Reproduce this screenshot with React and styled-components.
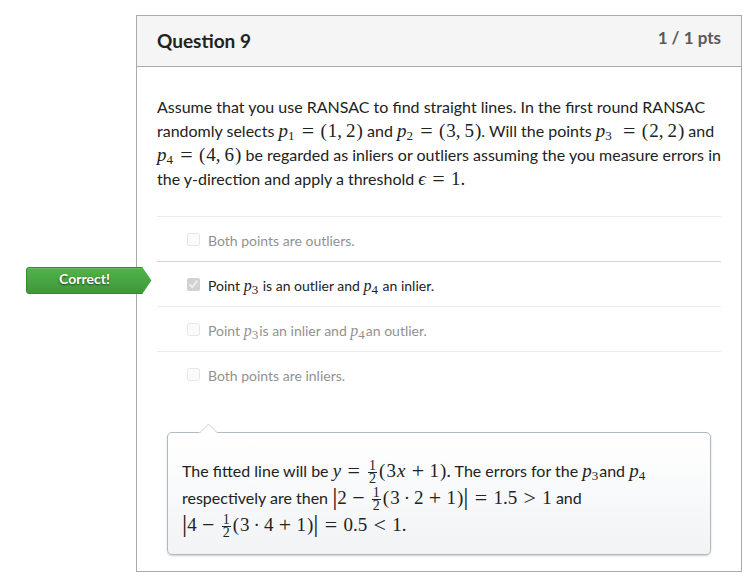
import React from "react";
import styled, { createGlobalStyle } from "styled-components";

const GlobalStyle = createGlobalStyle`
  *, *::before, *::after { box-sizing: border-box; }
  body {
    margin: 0;
    background: #fff;
    color: #222;
    font-family: Lato, "Liberation Sans", sans-serif;
    font-size: 16px;
    line-height: 24px;
  }
`;

const Page = styled.main`
  padding: 15px 9px 9px 136px;
`;

const Card = styled.section`
  border: 1px solid #aaa;
  background: #fff;
`;

const Header = styled.header`
  display: flex;
  justify-content: space-between;
  align-items: flex-start;
  padding: 10px 20px 13px;
  background: #f5f5f5;
  border-bottom: 1px solid #aaa;
`;

const Title = styled.h2`
  margin: 3px 0 0;
  font-size: 19px;
  line-height: 24px;
  font-weight: 700;
`;

const Points = styled.span`
  font-size: 17px;
  line-height: 24px;
  font-weight: 700;
  color: #595959;
`;

const Body = styled.div`
  padding: 28px 20px 16px;
`;

const Prompt = styled.p`
  margin: 0 0 25px;
`;

const Answers = styled.fieldset`
  margin: 0;
  padding: 0;
  border: 0;
  min-width: 0;
`;

const Answer = styled.div`
  position: relative;
  height: 45px;
  padding: 13px 30px 0;
  border-top: 1px solid ${(p) => (p.$selected ? "#d5d5d5" : "#ebebeb")};
`;

const Choice = styled.label`
  display: flex;
  gap: 8px;
  font-size: 14px;
  line-height: 22px;
  opacity: ${(p) => (p.$selected ? 1 : 0.5)};
`;

const Checkbox = styled.input`
  flex: none;
  width: 13px;
  height: 13px;
  margin: 3px 0 0;
`;

const Flag = styled.div`
  position: absolute;
  z-index: 1;
  top: 5px;
  left: -131px;
  width: 126px;
  height: 27px;
  padding-right: 9px;
  color: #fff;
  font-size: 14px;
  line-height: 24px;
  font-weight: 700;
  text-align: center;
  text-shadow: 0 1px 2px rgba(0, 0, 0, 0.6);
`;

const FlagShape = styled.svg`
  position: absolute;
  inset: 0;
  z-index: -1;
`;

const Comment = styled.aside`
  position: relative;
  margin: 36px 10px 0;
  padding: 24px 14px 16px;
  border: 1px solid #afbbc4;
  border-radius: 5px;
  background: linear-gradient(#fff, #f1f3f5);
  box-shadow: 0 1px 2px rgba(0, 0, 0, 0.2);
`;

const CommentText = styled.p`
  margin: 0;
  line-height: 27px;
`;

const Pointer = styled.svg`
  position: absolute;
  top: -10px;
  left: 31px;
`;

const MathText = styled.span`
  font-family: "Liberation Serif", serif;
  font-size: ${(p) => (p.$small ? 16 : 19)}px;
  line-height: 0;
  white-space: nowrap;
`;

const Sub = styled.sub`
  margin-right: 1px;
  font-size: 13px;
  line-height: 0;
  vertical-align: -3px;
`;

const Operator = styled.span`
  display: inline-block;
  width: 15px;
  margin: 0 ${(p) => (p.$binary ? 4 : 5)}px;
  font-size: 22px;
  line-height: 0;
  text-align: center;
  vertical-align: -1px;
`;

const Paren = styled.span`
  margin-left: ${(p) => (p.$close ? 1 : 0)}px;
  margin-right: ${(p) => (p.$close ? 0 : 1)}px;
`;

const Dot = styled.span`
  margin: 0 4px;
`;

const Comma = styled.span`
  margin-right: 4px;
`;

const Unknown = styled.i`
  margin: 0 1px;
`;

const Bar = styled.span`
  font-size: 26px;
  line-height: 0;
  vertical-align: -1px;
`;

const Fraction = styled.span`
  display: inline-flex;
  flex-direction: column;
  width: 9px;
  margin: -4px 2px;
  font-size: 14px;
  line-height: 12px;
  text-align: center;
  vertical-align: middle;
`;

const Numerator = styled.span`
  border-bottom: 1px solid #222;
`;

const Var = ({ n, small }) => (
  <MathText $small={small}>
    <i>p</i>
    <Sub>{n}</Sub>
  </MathText>
);

const Eq = () => <Operator>=</Operator>;
const Plus = () => <Operator $binary>+</Operator>;
const Minus = () => <Operator $binary>−</Operator>;
const Open = () => <Paren>(</Paren>;
const Close = () => <Paren $close>)</Paren>;

const Half = () => (
  <Fraction>
    <Numerator>1</Numerator>
    <span>2</span>
  </Fraction>
);

const Pair = ({ a, b }) => (
  <>
    <Open />
    {a}
    <Comma>,</Comma>
    {b}
    <Close />
  </>
);

const PointDef = ({ n, a, b }) => (
  <MathText>
    <i>p</i>
    <Sub>{n}</Sub>
    <Eq />
    <Pair a={a} b={b} />
  </MathText>
);

const ErrorTerm = ({ y, x }) => (
  <>
    <Bar>|</Bar>
    {y}
    <Minus />
    <Half />
    <Open />3<Dot>·</Dot>
    {x}
    <Plus />1<Close />
    <Bar>|</Bar>
  </>
);

const CorrectFlag = () => (
  <Flag>
    <FlagShape width="126" height="27" viewBox="0 0 126 27" aria-hidden="true">
      <defs>
        <linearGradient id="flag" x1="0" y1="0" x2="0" y2="1">
          <stop offset="0" stopColor="#4fb548" />
          <stop offset="1" stopColor="#41953b" />
        </linearGradient>
      </defs>
      <path
        d="M3 .5H116.5L125.5 13.5L116.5 26.5H3Q.5 26.5 .5 24V3Q.5 .5 3 .5Z"
        fill="url(#flag)"
      />
      <path
        d="M116.5 .5H3Q.5 .5 .5 3V24Q.5 26.5 3 26.5H116.5"
        fill="none"
        stroke="#37882f"
      />
      <path d="M2 1.5H116" stroke="#62c05b" />
    </FlagShape>
    Correct!
  </Flag>
);

const answers = [
  { id: "a1", text: "Both points are outliers." },
  {
    id: "a2",
    selected: true,
    text: (
      <>
        Point <Var n="3" small /> is an outlier and <Var n="4" small /> an inlier.
      </>
    ),
  },
  {
    id: "a3",
    text: (
      <>
        Point <Var n="3" small />
        is an inlier and <Var n="4" small />
        an outlier.
      </>
    ),
  },
  { id: "a4", text: "Both points are inliers." },
];

export default function App() {
  return (
    <>
      <GlobalStyle />
      <Page>
        <Card>
          <Header>
            <Title>Question 9</Title>
            <Points>1 / 1 pts</Points>
          </Header>
          <Body>
            <Prompt>
              Assume that you use RANSAC to find straight lines. In the first round RANSAC
              randomly selects <PointDef n="1" a="1" b="2" /> and{" "}
              <PointDef n="2" a="3" b="5" />. Will the points <Var n="3" />{" "}
              <MathText>
                <Eq />
                <Pair a="2" b="2" />
              </MathText>{" "}
              and <PointDef n="4" a="4" b="6" /> be regarded as inliers or outliers
              assuming the you measure errors in the y-direction and apply a threshold{" "}
              <MathText>
                <i>ϵ</i>
                <Eq />1.
              </MathText>
            </Prompt>
            <Answers aria-label="Answers">
              {answers.map(({ id, text, selected }) => (
                <Answer key={id} $selected={selected}>
                  {selected && <CorrectFlag />}
                  <Choice htmlFor={id} $selected={selected}>
                    <Checkbox id={id} type="checkbox" defaultChecked={selected} disabled />
                    <span>{text}</span>
                  </Choice>
                </Answer>
              ))}
            </Answers>
            <Comment>
              <Pointer width="20" height="11" viewBox="0 0 20 11" aria-hidden="true">
                <path d="M0 10L9.5 1L19 10V11H0Z" fill="#fff" />
                <path d="M.5 10L9.5 1L18.5 10" fill="none" stroke="#c8d0d6" />
              </Pointer>
              <CommentText>
                The fitted line will be{" "}
                <MathText>
                  <i>y</i>
                  <Eq />
                  <Half />
                  <Open />3<Unknown>x</Unknown>
                  <Plus />1<Close />.
                </MathText>{" "}
                The errors for the <Var n="3" />
                and <Var n="4" /> respectively are then{" "}
                <MathText>
                  <ErrorTerm y="2" x="2" />
                  <Eq />
                  1.5
                  <Operator>&gt;</Operator>1
                </MathText>{" "}
                and{" "}
                <MathText>
                  <ErrorTerm y="4" x="4" />
                  <Eq />
                  0.5
                  <Operator>&lt;</Operator>
                  1.
                </MathText>
              </CommentText>
            </Comment>
          </Body>
        </Card>
      </Page>
    </>
  );
}
